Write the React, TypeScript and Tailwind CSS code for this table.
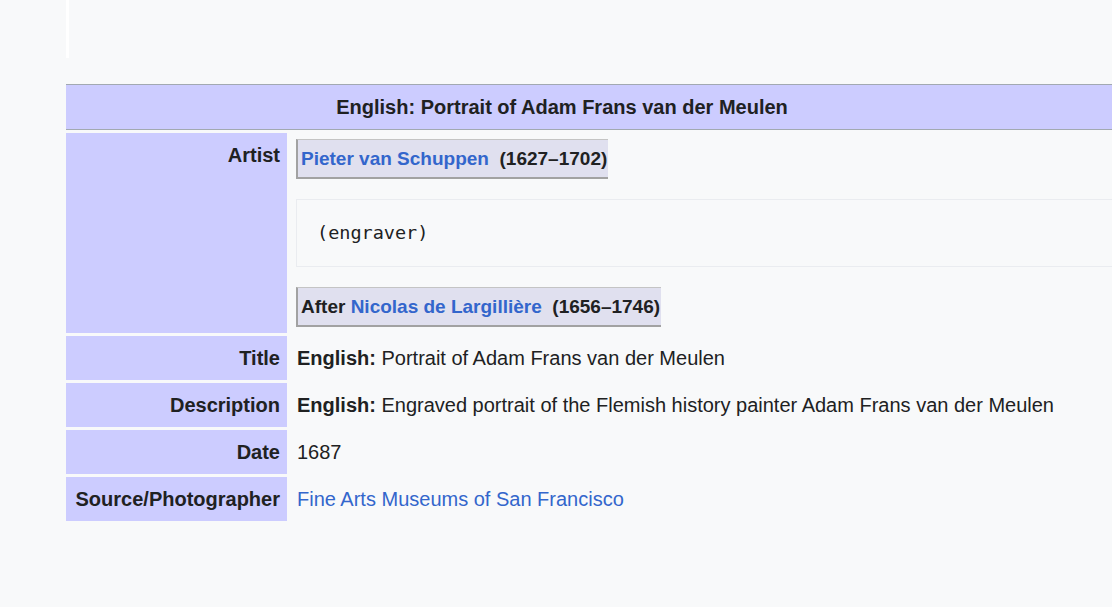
import React from 'react'

const link = 'text-[#3366cc]'

function Label({ children }: { children: React.ReactNode }) {
  return (
    <div className="bg-[#ccccff] px-[7px] py-1.5 text-right font-bold leading-8">
      {children}
    </div>
  )
}

function Cell({ children }: { children: React.ReactNode }) {
  return <div className="px-[7px] py-1.5 leading-8">{children}</div>
}

function CreatorBox({ children }: { children: React.ReactNode }) {
  return (
    <div className="inline-block border-t border-l-2 border-b-2 border-t-[#c4c4c4] border-l-[#a2a2a2] border-b-[#a2a2a2] bg-[#e0e0ef] pl-[3px] pr-px pt-[3px] pb-[2px] text-[19px] font-bold leading-8">
      {children}
    </div>
  )
}

export default function App() {
  return (
    <div
      className="h-[607px] w-[1112px] overflow-hidden bg-[#f8f9fa] text-[20px] text-[#202122]"
      style={{ fontFamily: '"Liberation Sans", Arial, sans-serif' }}
    >
      <div className="ml-[66px] h-[58px] w-[3px] bg-white" />

      <div className="ml-[66px] mt-[26px] w-[1100px]">
        <div className="border-y border-[#a2a9b1] bg-[#ccccff] pr-[108px] text-center font-bold leading-[44px]">
          English: Portrait of Adam Frans van der Meulen
        </div>

        <div className="mt-[3px] grid grid-cols-[221px_1fr] gap-[3px]">
          <Label>Artist</Label>
          <div className="flex flex-col items-start pl-[6px] pr-[7px] py-1.5">
            <CreatorBox>
              <span className={link}>Pieter van Schuppen</span>
              {'\u00a0\u00a0'}(1627–1702)
            </CreatorBox>
            <pre
              className="my-5 self-stretch border border-[#eaecf0] py-[21px] pl-[20px] text-[18.5px] leading-6"
              style={{ fontFamily: '"DejaVu Sans Mono", monospace' }}
            >
              (engraver)
            </pre>
            <CreatorBox>
              After <span className={link}>Nicolas de Largillière</span>
              {'\u00a0\u00a0'}(1656–1746)
            </CreatorBox>
          </div>

          <Label>Title</Label>
          <Cell>
            <b>English:</b> Portrait of Adam Frans van der Meulen
          </Cell>

          <Label>Description</Label>
          <Cell>
            <b>English:</b> Engraved portrait of the Flemish history painter Adam Frans van der Meulen
          </Cell>

          <Label>Date</Label>
          <Cell>1687</Cell>

          <Label>Source/Photographer</Label>
          <Cell>
            <span className={link}>Fine Arts Museums of San Francisco</span>
          </Cell>
        </div>
      </div>
    </div>
  )
}
